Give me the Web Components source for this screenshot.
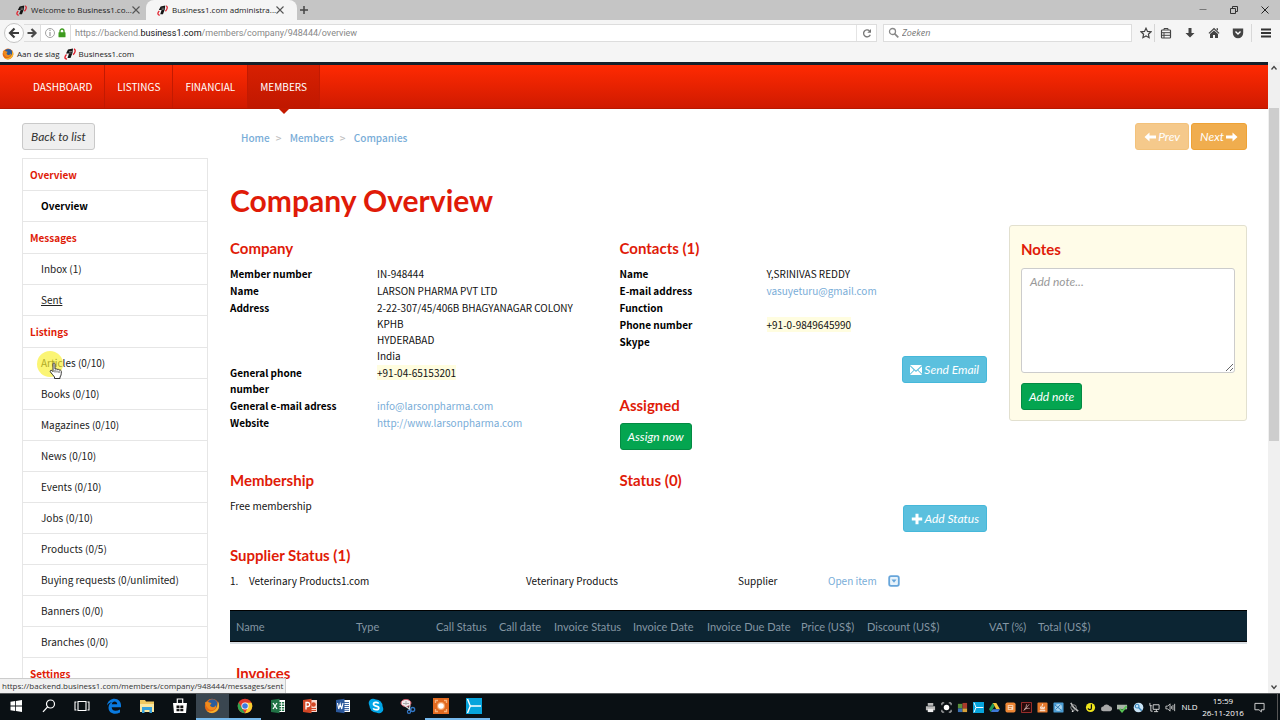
<!DOCTYPE html>
<html lang="en">
<head>
<meta charset="utf-8">
<title>Business1.com administration</title>
<style>
  :root {
    --sans: "Noto Sans CJK SC", "Noto Sans", sans-serif;
    --display: Lato, sans-serif;
    --chrome: "Open Sans", "Noto Sans", sans-serif;
    --red: #e01b08;
    --link: #79add8;
    --line: #e6e6e6;
  }
  html, body { height: 100%; margin: 0; overflow: hidden; }
  body { background: #fff; }
</style>
</head>
<body>
<desktop-screen></desktop-screen>

<script>
const ICONS = {
  brand: ['0 0 12 12', '<path d="M4 1.500 9 .5 8.500 5 6.500 10H3.500L5 5.500H2z" fill="#151515"/><path d="M5 3.500h3M5 5h2.500" stroke="#999" stroke-width=".7"/><path d="M2.500 6.500C.3 8.500.5 11.300 3 10.900M10 .8c1.800.8 1.500 3.700-.8 6" fill="none" stroke="#e0202c" stroke-width="1.400"/>'],
  close: ['0 0 10 10', '<path d="m1.500 1.500 7 7m0-7-7 7" stroke="#555" stroke-width="1.100"/>'],
  plus: ['0 0 10 10', '<path d="M5 1v8M1 5h8" stroke="#444" stroke-width="1.500"/>'],
  min: ['0 0 10 10', '<path d="M1.500 4.500h7" stroke="#777"/>'],
  restore: ['0 0 10 10', '<path d="M1.500 3.500h5v5h-5zM3.500 3V1.500h5v5H7" fill="none" stroke="#333"/>'],
  winclose: ['0 0 10 10', '<path d="m1.500 1.500 7 7m0-7-7 7" stroke="#222"/>'],
  back: ['0 0 12 12', '<path d="M6.500 1.500 2 6l4.500 4.500M2.500 6H11" fill="none" stroke="#3c3c3c" stroke-width="2.200"/>'],
  forward: ['0 0 12 12', '<path d="M5.500 2 9.500 6l-4 4M9 6H1.500" fill="none" stroke="#4a4a4a" stroke-width="2.200"/>'],
  info: ['0 0 12 12', '<circle cx="6" cy="6" r="4.500" fill="none" stroke="#999" stroke-width=".9"/><path d="M6 5v4M6 2.800v1.300" stroke="#999" stroke-width="1.200"/>'],
  lock: ['0 0 12 12', '<path d="M4 6V4a2 2 0 0 1 4 0v2" fill="none" stroke="#3e9b1f" stroke-width="1.300"/><rect x="2.500" y="5.300" width="7" height="5" rx=".5" fill="#3e9b1f"/>'],
  reload: ['0 0 12 12', '<path d="M9.300 7.800A3.500 3.500 0 1 1 8.500 3.800" fill="none" stroke="#777" stroke-width="1.300"/><path d="M10 2v3.700H6.300z" fill="#777"/>'],
  search: ['0 0 12 12', '<circle cx="4.500" cy="4.500" r="3" fill="none" stroke="#888" stroke-width="1.300"/><path d="m6.800 6.800 3.500 3.500" stroke="#888" stroke-width="1.700"/>'],
  star: ['0 0 12 12', '<path d="m6 1.200 1.500 3.200 3.500.4-2.600 2.400.7 3.500L6 9l-3.100 1.700.7-3.500L1 4.800l3.500-.4z" fill="none" stroke="#444" stroke-width="1.200"/>'],
  clip: ['0 0 12 12', '<rect x="1.500" y="3" width="9" height="8" rx=".8" fill="none" stroke="#444" stroke-width="1.200"/><path d="M4 3V1.500h4V3M1.500 5.700h9M1.500 8.300h9M4 5.700V11" fill="none" stroke="#444"/>'],
  down: ['0 0 12 12', '<path d="M4.500 1h3v5H10.500L6 10.500 1.500 6h3z" fill="#444"/>'],
  home: ['0 0 12 12', '<path d="M6 .8 11.500 6l-.8.8L6 2.500 1.300 6.800.5 6zM6 3.500l4 3.500v4H7V8H5v3H2V7zM8.500 1.200H10v2.500L8.500 2.400z" fill="#444"/>'],
  pocket: ['0 0 12 12', '<path d="M.8 1.500h10.400V6a5.200 5.200 0 0 1-10.400 0z" fill="#444"/><path d="M3.500 4.500 6 7l2.500-2.500" fill="none" stroke="#fff" stroke-width="1.400"/>'],
  menu: ['0 0 12 12', '<path d="M1 2.500h10M1 6h10M1 9.500h10" stroke="#333" stroke-width="1.800"/>'],
  left: ['0 0 12 12', '<path d="M5.500 1.500V4.500H12v3H5.500v3L.5 6z" fill="#fff"/>'],
  right: ['0 0 12 12', '<path d="M6.500 1.500V4.500H0v3h6.500v3l5-4.500z" fill="#fff"/>'],
  mail: ['0 0 12 12', '<path d="M0 1h12L6 6.500zM0 2.200 3.700 6 0 9.800zM12 2.200 8.300 6l3.700 3.800zM4.400 6.500 6 8l1.600-1.500L12 11H0z" fill="#fff"/>'],
  add: ['0 0 12 12', '<path d="M4.500.8h3v3.700h3.700v3H7.500v3.700h-3V7.500H.8v-3h3.700z" fill="#fff"/>'],
  expand: ['0 0 12 12', '<rect x="1.200" y="1.200" width="9.600" height="9.600" rx="1.800" fill="#e8f3fb" stroke="#67a5da" stroke-width="1.800"/><path d="M3.500 4.600h5L6 7.800z" fill="#67a5da"/>'],
  up: ['0 0 10 10', '<path d="m2.500 6.500 2.500-3 2.500 3" fill="none" stroke="#444" stroke-width="1.300"/>'],
  dn: ['0 0 10 10', '<path d="m2.500 3.500 2.500 3 2.500-3" fill="none" stroke="#444" stroke-width="1.300"/>'],
  hand: ['0 0 14 18', '<path d="M4 1.500c1-1 2-.3 2 .7v5c1.300-1 2 0 2 .4 1-.8 1.900-.2 2 .6 1-.6 2.300 0 2.300 1.300 0 3-.2 4-1.300 5.500v1.500H5.500V15C4 13 2.500 11.500 1.300 9.800.8 8.500 2 7.800 3 8.700l1 1z" fill="#fff" stroke="#333"/><path d="M6 8v2.500M8 8.500v2M10 9v2" stroke="#333" stroke-width=".8"/>'],
  firefox: ['0 0 16 16', '<circle cx="8" cy="8" r="7.200" fill="#e66a14"/><circle cx="8.500" cy="6.300" r="5" fill="#2b5d9c"/><path d="M1 4.500C3 2.500 5 4.500 7.500 5L6 7.500c2 3 5.500 1.500 6-.5.800 2-.5 4.500-3.500 5C5 12.500 2 9 1 4.500z" fill="#f08a1c"/><path d="M14 3.500c2 4 1 8-2 10s-7 2-9.500-1c4 2.500 9 .5 10.500-3.500.6-2 .8-4 1-5.500z" fill="#f8b62d"/>'],
  windows: ['0 0 16 16', '<path d="M2.500 3.700 7.200 3v4.600H2.500zM8 2.900l6-.9v5.600H8zM2.500 8.400h4.700V13l-4.700-.7zM8 8.400h6V14l-6-.9z" fill="#fff"/>'],
  find: ['0 0 16 16', '<circle cx="9.500" cy="6" r="4" fill="none" stroke="#fff" stroke-width="1.200"/><path d="m6.600 8.900-4.600 5" stroke="#fff" stroke-width="1.300"/>'],
  tasks: ['0 0 16 16', '<path d="M4 3.500h8v9H4zM2.500 4H1v8h1.500M13.500 4H15v8h-1.500" fill="none" stroke="#fff" stroke-width="1.100"/>'],
  edge: ['0 0 16 16', '<path d="M1 7.500C1.700 3 5 .8 8.500.8c4 0 6.500 3 6.500 6.500v1.900H5.700c.1 4 4.500 4.300 8.300 2.200v3c-5.500 3-11.500.6-11.500-5 0-3 2-4.700 4-5.400C3.500 4.200 2 5.700 1 7.500zm4.800-1.200h5.400c0-3.600-5-3.600-5.400 0z" fill="#0a7be0"/>'],
  folder: ['0 0 16 16', '<path d="M1 2h5l1 1.500h8V14H1z" fill="#f0c860"/><path d="M1 6h14v8H1z" fill="#fae7a0"/><path d="M3 9h10v6h-2.500v-3h-5v3H3z" fill="#36a1dc"/>'],
  store: ['0 0 16 16', '<path d="M1 5h14l-1 10H2z" fill="#fff"/><path d="M5.300 5V1h5.400v4" fill="none" stroke="#fff" stroke-width="1.200"/><path d="M4.500 7.500h3v2.500h-3zM8.300 7.500h3v2.500h-3zM4.500 10.700h3v2.500h-3zM8.300 10.700h3v2.500h-3z" fill="#111"/>'],
  chrome: ['0 0 16 16', '<circle cx="8" cy="8" r="7.300" fill="#e03b2e"/><path d="M1.600 4.500 6 12l2 3.300A7.300 7.300 0 0 1 1.600 4.500z" fill="#2fa44f"/><path d="M8 15.300 11.500 8 8 4.700h6.500A7.300 7.300 0 0 1 8 15.300z" fill="#f9cf30"/><circle cx="8" cy="8" r="3.600" fill="#fff"/><circle cx="8" cy="8" r="2.800" fill="#3d7ce0"/>'],
  excel: ['0 0 16 16', '<path d="M8 2h7v12H8z" fill="#fff"/><path d="M9 4h2.200v1.500H9zM12 4h2.200v1.500H12zM9 6.500h2.200V8H9zM12 6.500h2.200V8H12zM9 9h2.200v1.500H9zM12 9h2.200v1.500H12zM9 11.500h2.200V13H9zM12 11.500h2.200V13H12z" fill="#217346"/><path d="M1 2 9.500.7v14.600L1 14z" fill="#217346"/><path d="m3 5 4 6m0-6-4 6" stroke="#fff" stroke-width="1.300"/>'],
  ppt: ['0 0 16 16', '<path d="M8 2h7v12H8z" fill="#f7d8cf"/><circle cx="11.500" cy="6.500" r="2.300" fill="#d24726"/><path d="M9 10.500h5M9 12.500h5" stroke="#d24726"/><path d="M1 2 9.500.7v14.600L1 14z" fill="#d24726"/><path d="M4 11.500v-7h1.700a1.800 1.800 0 0 1 0 4H4" fill="none" stroke="#fff" stroke-width="1.300"/>'],
  word: ['0 0 16 16', '<path d="M8 2h7v12H8z" fill="#fff"/><path d="M9 4.500h5M9 6.500h5M9 8.500h5M9 10.500h5M9 12.300h5" stroke="#2b579a" stroke-width=".9"/><path d="M1 2 9.500.7v14.600L1 14z" fill="#2b579a"/><path d="m2.500 5 1.200 6 1.500-5 1.500 5L8 5" fill="none" stroke="#fff" stroke-width="1.100"/>'],
  skype: ['0 0 16 16', '<circle cx="5" cy="5" r="4.300" fill="#00a5e6"/><circle cx="11" cy="11" r="4.300" fill="#00a5e6"/><circle cx="8" cy="8" r="6.500" fill="#00a5e6"/><path d="M10.700 5.600C9.800 3.700 5.500 4 5.500 6.200c0 2.400 5.300 1.300 5.300 3.700 0 2.200-4.800 2.500-5.500.3" fill="none" stroke="#fff" stroke-width="1.700"/>'],
  snip: ['0 0 16 16', '<ellipse cx="6" cy="5" rx="5" ry="3.600" fill="#f3e8ea" stroke="#cf5a68"/><path d="M3 5.500h6M6 3v4" stroke="#aaa"/><path d="m5 8 6 4M10 7l-1 6" stroke="#ddd" stroke-width="1.200"/><circle cx="12.700" cy="11.500" r="2" fill="none" stroke="#3276c4" stroke-width="1.300"/><circle cx="9" cy="13.700" r="1.600" fill="none" stroke="#3276c4" stroke-width="1.200"/>'],
  capture: ['0 0 16 16', '<path d="M0 0h16v16H0z" fill="#e2691f"/><path d="M2.500 5V2.500H5M11 2.500h2.500V5M13.500 11v2.500H11M5 13.500H2.500V11" fill="none" stroke="#f6b27d" stroke-width="1.300"/><circle cx="8" cy="8" r="4" fill="#f4a468"/><circle cx="8" cy="8" r="2.800" fill="#fff"/>'],
  wings: ['0 0 16 16', '<path d="M0 0h16v16H0z" fill="#07a4dc"/><path d="m1.500 1 2.800 7-2.800 7M4.300 8H15" fill="none" stroke="#fff" stroke-width="1.400"/>'],
  printer: ['0 0 12 12', '<path d="M3 1h6v3H3zM1 4.500h10V9H1z" fill="#bbb"/><path d="M3 7.500h6V11H3z" fill="#eee"/>'],
  target: ['0 0 12 12', '<circle cx="6" cy="6" r="3" fill="#fff"/><path d="M1 3.500V1h2.500M8.500 1H11v2.500M11 8.500V11H8.500M3.500 11H1V8.500" fill="none" stroke="#ddd"/>'],
  blocks: ['0 0 12 12', '<path d="M1 2h5v5H1z" fill="#58903b"/><path d="M6 1h5v6H6z" fill="#a93a2b"/><path d="M1 7h5v4H1z" fill="#3a70b3"/><path d="M6 7h5v4H6z" fill="#d8a138"/>'],
  drive: ['0 0 12 12', '<path d="M4 1h4l4 7H8z" fill="#f6c83a"/><path d="M4 1 0 8l2 3 4-6.500z" fill="#229a57"/><path d="M4 8h8l-2 3H2z" fill="#3c78d8"/>'],
  orange: ['0 0 12 12', '<rect x=".5" y=".5" width="11" height="11" rx="2" fill="#ee8735"/><path d="M3 3.500h6v5H3z" fill="#fbe3cd"/><path d="M4 5h4M4 7h3" stroke="#d66d1e"/>'],
  acro: ['0 0 12 12', '<path d="M.5.5h11v11H.5z" fill="#2a0a0a" stroke="#a83330"/><path d="M3 9.500C5 7 6 5 6 2.500M9 2.500 4 8.500M3.500 8c2-1 4-1.300 6-1" fill="none" stroke="#d9b7b4" stroke-width=".8"/>'],
  java: ['0 0 12 12', '<rect x=".5" y=".5" width="11" height="11" rx="1" fill="#e5792c"/><path d="M3 9.500h6M3.500 7.500h5M6 6c-2-2 1-2 0-4M4 5v1.500h4V5" fill="none" stroke="#fff"/>'],
  globe: ['0 0 12 12', '<rect x=".5" y=".5" width="11" height="11" rx="1" fill="#4c9dd4"/><circle cx="6" cy="6" r="3.800" fill="#a7d3ee"/><path d="m2 3 7 6M3 8l5-5" stroke="#2876ae"/>'],
  plug: ['0 0 12 12', '<path d="m2 1 3 5 5 4" stroke="#bbb" stroke-width="1.800"/><circle cx="5" cy="6" r="3" fill="none" stroke="#999"/><circle cx="4" cy="10" r="1" fill="#ddd"/>'],
  clockdot: ['0 0 12 12', '<circle cx="6" cy="6" r="5" fill="#efe51c"/><path d="M7 2.500v4.300c0 2-3.500 2-3.500 0" fill="none" stroke="#111" stroke-width="1.300"/>'],
  cloud: ['0 0 12 12', '<path d="M2.500 10a2.500 2.500 0 0 1 0-5 4 4 0 0 1 7-.5A2.800 2.800 0 0 1 10 10z" fill="#a8a8a8"/>'],
  safe: ['0 0 12 12', '<path d="M0 3h11v5H0z" fill="#aab5a9"/><path d="m3 7.500 2.500 3 5-6" fill="none" stroke="#57c353" stroke-width="2"/>'],
  tool: ['0 0 12 12', '<circle cx="6" cy="6" r="5.300" fill="#c8e3f5"/><circle cx="4.500" cy="4.500" r="2" fill="none" stroke="#3787be" stroke-width="1.200"/><path d="m6 6 3.500 3.500" stroke="#3787be" stroke-width="1.500"/>'],
  net: ['0 0 12 12', '<path d="M4.500 3H11v5H4.500zM8 8v2.500M5.500 10.500H10M1 1v3h2M2 4v6h2" fill="none" stroke="#ddd"/>'],
  sound: ['0 0 12 12', '<path d="M1 4.500h2L5.500 2v8L3 7.500H1zM7 4.500v3M8.700 3.200v5.600M10.500 2v8" fill="none" stroke="#ddd" stroke-width=".9"/>'],
  notice: ['0 0 12 12', '<path d="M1 1.500h10v7H8v2.300L5.500 8.500H1z" fill="none" stroke="#ddd"/>']
};

const define = (name, css, html) => {
  customElements.define(name, class extends HTMLElement {
    constructor() { super(); this.attachShadow({ mode: 'open' }); }
    connectedCallback() {
      if (this.shadowRoot.firstChild) return;
      const t = document.createElement('template');
      t.innerHTML = `<style>*{box-sizing:border-box}${css}</style>` +
        (typeof html === 'function' ? html(this) : html);
      this.shadowRoot.append(t.content.cloneNode(true));
    }
  });
};

define('ui-icon',
  ':host{display:inline-block;flex:none;width:12px;height:12px}svg{display:block;width:100%;height:100%}',
  el => { const [box, art] = ICONS[el.getAttribute('name')];
    return `<svg viewBox="${box}" aria-hidden="true">${art}</svg>`; });

define('ui-button', `
  :host{display:inline-block;flex:none}
  button{display:flex;align-items:center;gap:2px;height:27px;padding:0 8px;border:1px solid #c9c9c9;border-radius:3px;
    background:#efefef;color:#333;font:italic 12px/20px var(--display);white-space:nowrap}
  :host([kind=green]) button{padding:0 7px;background:#04a550;border-color:#048a43;color:#fff}
  :host([kind=blue]) button{padding:0 7px;background:#5bc0de;border-color:#46b8da;color:#fff}
  :host([kind=amber]) button{background:#f0ad4e;border-color:#eea236;color:#fff}
  :host([disabled]) button{opacity:.65}`,
  el => `<button type="button"${el.hasAttribute('disabled') ? ' disabled' : ''}><slot></slot></button>`);

define('browser-tab', `
  :host{display:block;width:140px;height:20px;padding-left:10px}
  :host([active]){padding:0;width:151px}
  .tab{display:flex;align-items:center;gap:4px;height:20px;padding:0 0 0 5px;font:8px/20px var(--chrome);color:#222}
  :host([active]) .tab{padding:0 12px 0 11px;background:#f5f5f5;border-radius:8px 8px 0 0}
  .t{flex:1;min-width:0;white-space:nowrap}
  ui-icon{width:11px;height:11px}
  button{display:flex;border:0;padding:0;background:none}
  button ui-icon{width:10px;height:10px}`,
  `<div class="tab"><ui-icon name="brand"></ui-icon><span class="t"><slot></slot></span>
   <button aria-label="Close tab"><ui-icon name="close"></ui-icon></button></div>`);

define('browser-chrome', `
  :host{display:block;flex:none;background:#f5f5f5;font:8px/16px var(--chrome);color:#222}
  button{display:grid;place-items:center;border:0;padding:0;background:none;flex:none}
  .tabs{display:flex;height:20px;padding-left:1px;background:#c5c5c5}
  .tabs browser-tab:first-child{margin-right:5px}
  .new{width:14px}.new ui-icon{width:10px;height:10px}
  .win{margin-left:auto;display:flex;gap:11px;padding-right:5px}
  .win button{width:20px}.win ui-icon{width:10px;height:10px}
  .bar{display:flex;align-items:center;height:26px;padding-left:4px}
  .back{width:20px;height:20px;border:1px solid #c4c4c4;border-radius:10px;background:#fdfdfd}
  .fwd{width:17px;height:18px;border:1px solid #ddd;border-left:0}
  .url{flex:1;display:flex;align-items:center;height:18px;border:1px solid #ddd;border-left:0;background:#fff;padding-left:3px}
  .url a{color:#888;text-decoration:none;padding-left:4px;border-left:1px solid #ddd;margin-left:2px;flex:1;font:9px/16px Roboto,sans-serif}
  .url b{font-weight:400;color:#111}
  .url .re{width:20px;height:16px;border-left:1px solid #e4e4e4}
  .find{display:flex;align-items:center;width:249px;height:18px;margin:0 7px 0 6px;padding:0 4px;border:1px solid #ddd;background:#fff;gap:2px}
  input{flex:1;min-width:0;border:0;padding:0;background:none;font:italic 9px/14px var(--chrome)}
  input::placeholder{color:#777;opacity:1}
  .ic{width:14px;height:18px;margin-right:10px}
  .ic.s{width:16px;margin-right:4px;border-right:1px solid #d5d5d5;padding-right:1px}
  .ic.m{width:29px;margin:0 0 0 -4px;border-left:1px solid #d8d8d8}
  .marks{display:flex;align-items:center;height:16px;padding-left:2px}
  .marks a{display:flex;align-items:center;gap:3px;margin-right:4px;color:#222;text-decoration:none}`,
  `<div class="tabs"><browser-tab>Welcome to Business1.co...</browser-tab><browser-tab active>Business1.com administra...</browser-tab>
    <button class="new" aria-label="New tab"><ui-icon name="plus"></ui-icon></button>
    <div class="win"><button aria-label="Minimise"><ui-icon name="min"></ui-icon></button><button aria-label="Restore"><ui-icon name="restore"></ui-icon></button><button aria-label="Close"><ui-icon name="winclose"></ui-icon></button></div></div>
  <div class="bar"><button class="back" aria-label="Back"><ui-icon name="back"></ui-icon></button><button class="fwd" aria-label="Forward"><ui-icon name="forward"></ui-icon></button>
    <div class="url"><ui-icon name="info"></ui-icon><ui-icon name="lock"></ui-icon><a href="#">https://backend.<b>business1.com</b>/members/company/948444/overview</a><button class="re" aria-label="Reload"><ui-icon name="reload"></ui-icon></button></div>
    <label class="find"><ui-icon name="search"></ui-icon><input aria-label="Search" placeholder="Zoeken"></label>
    <button class="ic s" aria-label="Bookmark"><ui-icon name="star"></ui-icon></button><button class="ic" aria-label="Library"><ui-icon name="clip"></ui-icon></button><button class="ic" aria-label="Downloads"><ui-icon name="down"></ui-icon></button><button class="ic" aria-label="Home"><ui-icon name="home"></ui-icon></button><button class="ic" aria-label="Pocket"><ui-icon name="pocket"></ui-icon></button><button class="ic m" aria-label="Menu"><ui-icon name="menu"></ui-icon></button></div>
  <div class="marks"><a href="#"><ui-icon name="firefox"></ui-icon>Aan de slag</a><a href="#"><ui-icon name="brand"></ui-icon>Business1.com</a></div>`);

define('main-nav', `
  :host{display:block;border-top:3px solid #14202a;background:linear-gradient(#ff2a02,#cf1a00);height:47px;border-bottom:1px solid #b81800}
  nav{display:flex;height:43px;padding-left:21px}
  a{position:relative;padding:0 12px;border-right:1px solid #c21a02;color:#fff;font:10px/44px var(--sans);text-decoration:none}
  a[aria-current]{background:linear-gradient(#d82002,#c01800)}
  a[aria-current]::after{content:"";position:absolute;left:50%;top:100%;margin-left:-6px;border:6px solid transparent;border-top-color:#c41900;border-bottom:0}`,
  `<nav><a href="#">DASHBOARD</a><a href="#">LISTINGS</a><a href="#">FINANCIAL</a><a href="#" aria-current="page">MEMBERS</a></nav>`);

define('menu-group', `
  :host{display:block}
  h4{margin:0;padding:0 7px;height:32px;border-bottom:1px solid var(--line);color:var(--red);font:bold 10px/32px var(--sans)}`,
  el => `<h4>${el.getAttribute('label')}</h4><slot></slot>`);

define('menu-item', `
  :host{display:block;position:relative;height:31px;border-bottom:1px solid var(--line);padding-left:18px;font:10px/30px var(--sans)}
  a{color:#222;text-decoration:none}
  :host([current]) a{font-weight:700;color:#000}
  :host([hover]) a{text-decoration:underline}`,
  '<a href="#"><slot></slot></a><slot name="over"></slot>');

define('click-pointer', `
  :host{position:absolute;left:14px;top:3px;width:30px;height:30px;pointer-events:none}
  i{position:absolute;left:0;top:0;width:26px;height:26px;border-radius:13px;background:#f9f02a;opacity:.65}
  ui-icon{position:absolute;left:12px;top:11px;width:14px;height:18px}`,
  '<i></i><ui-icon name="hand"></ui-icon>');

define('side-menu', `
  :host{display:block;border:1px solid var(--line);border-bottom:0}`,
  `<menu-group label="Overview"><menu-item current>Overview</menu-item></menu-group>
   <menu-group label="Messages"><menu-item>Inbox (1)</menu-item><menu-item hover>Sent</menu-item></menu-group>
   <menu-group label="Listings"><menu-item>Articles (0/10)<click-pointer slot="over"></click-pointer></menu-item><menu-item>Books (0/10)</menu-item><menu-item>Magazines (0/10)</menu-item><menu-item>News (0/10)</menu-item><menu-item>Events (0/10)</menu-item><menu-item>Jobs (0/10)</menu-item><menu-item>Products (0/5)</menu-item><menu-item>Buying requests (0/unlimited)</menu-item><menu-item>Banners (0/0)</menu-item><menu-item>Branches (0/0)</menu-item></menu-group>
   <menu-group label="Settings"></menu-group>`);

define('crumb-trail', `
  :host{display:flex;flex:1;align-items:center;padding:2px 0 0 11px;font:500 10px/16px var(--sans);color:#bbb}
  a{color:var(--link);text-decoration:none}
  span{width:20px;padding-left:6px}`,
  '<a href="#">Home</a><span>&gt;</span><a href="#">Members</a><span>&gt;</span><a href="#">Companies</a>');

define('info-section', `
  :host{display:block;font:10px/16px var(--sans);color:#111}
  h3{margin:0 0 8px;color:var(--red);font:bold 15px/20px var(--display)}`,
  el => `<h3>${el.getAttribute('label')}</h3><slot></slot>`);

define('info-list', `
  :host{display:grid;row-gap:1px}`, '<slot></slot>');

define('info-row', `
  :host{display:grid;grid-template-columns:2fr 3fr;font:10px/16px var(--sans);min-height:16px}
  b{color:#000;padding-right:40px}
  :host([wide]) b{padding-right:0;white-space:nowrap}
  ::slotted(a){color:var(--link);text-decoration:none}
  ::slotted(mark){background:#fffde0;color:inherit}`,
  el => `<b>${el.getAttribute('label')}</b><div><slot></slot></div>`);

define('notes-card', `
  :host{display:block;padding:13px 11px 10px;border:1px solid #e2e0cf;border-radius:3px;background:#fffce8}
  h3{margin:0 0 9px;color:var(--red);font:bold 15px/20px var(--display)}
  textarea{display:block;width:100%;height:105px;margin-bottom:10px;padding:4px 8px;border:1px solid #ccc;border-radius:3px;background:#fff;font:italic 12px/18px var(--display);resize:vertical}
  textarea::placeholder{color:#999}`,
  `<h3 id="n">Notes</h3><textarea aria-labelledby="n" placeholder="Add note..."></textarea><ui-button kind="green">Add note</ui-button>`);

define('supplier-table', `
  :host{display:block}
  table{width:100%;border-collapse:collapse;table-layout:fixed;font:10px/16px var(--sans);color:#111}
  td{padding:0;white-space:nowrap}
  a{color:var(--link);text-decoration:none}
  ui-icon{margin-left:11px;vertical-align:-2px}`,
  `<table><colgroup><col style="width:19px"><col style="width:277px"><col style="width:212px"><col style="width:90px"><col></colgroup>
   <tr><td>1.</td><td>Veterinary Products1.com</td><td>Veterinary Products</td><td>Supplier</td><td><a href="#">Open item<ui-icon name="expand"></ui-icon></a></td></tr></table>`);

const COLS = [['Name',120],['Type',80],['Call Status',63],['Call date',55],['Invoice Status',79],['Invoice Date',74],['Invoice Due Date',94],['Price (US$)',66],['Discount (US$)',122],['VAT (%)',49],['Total (US$)']];
define('invoice-table', `
  :host{display:block;border-bottom:2px solid #d9dfe4}
  table{width:100%;border-collapse:collapse;table-layout:fixed;background:#0c2533;border:solid #000;border-width:1px 0}
  th{height:31px;padding:1px 0 0 6px;text-align:left;color:#8496a3;font:11px/16px var(--display);white-space:nowrap}`,
  `<table><thead><tr>${COLS.map(([t, w]) => `<th scope="col"${w ? ` style="width:${w}px"` : ''}>${t}</th>`).join('')}</tr></thead></table>`);

define('company-page', `
  :host{display:block;height:100%;overflow:hidden;background:#fff}
  .body{display:grid;grid-template-columns:186px minmax(0,1fr);column-gap:22px;padding:14px 21px 0 22px}
  side-menu{margin-top:8px}
  .top{display:flex;height:27px;gap:2px}
  h1{margin:32px 0 7px;color:var(--red);font:bold 30px/36px var(--display)}
  .cols{display:grid;grid-template-columns:minmax(0,757fr) minmax(0,238fr);column-gap:22px;align-items:start}
  .info{display:grid;grid-template-columns:1fr 1fr;gap:20px 22px;padding-top:13px}
  .right{display:flex;justify-content:flex-end;padding-top:6px}
  .assigned{margin-top:12px}
  .status .right{padding-top:7px}
  .supplier{margin-top:13px}
  invoice-table{margin:21px 0 19px}
  .inv{padding-left:6px}`,
  `<main-nav></main-nav>
  <div class="body"><aside><ui-button>Back to list</ui-button><side-menu></side-menu></aside>
  <main><div class="top"><crumb-trail></crumb-trail><ui-button kind="amber" disabled><ui-icon name="left"></ui-icon>Prev</ui-button><ui-button kind="amber">Next<ui-icon name="right"></ui-icon></ui-button></div>
  <h1>Company Overview</h1>
  <div class="cols"><div><div class="info">
    <info-section label="Company"><info-list>
      <info-row label="Member number">IN-948444</info-row><info-row label="Name">LARSON PHARMA PVT LTD</info-row>
      <info-row label="Address">2-22-307/45/406B BHAGYANAGAR COLONY<br>KPHB<br>HYDERABAD<br>India</info-row>
      <info-row label="General phone number"><mark>+91-04-65153201</mark></info-row>
      <info-row wide label="General e-mail adress"><a href="#">info@larsonpharma.com</a></info-row>
      <info-row label="Website"><a href="#">http://www.larsonpharma.com</a></info-row></info-list></info-section>
    <div><info-section label="Contacts (1)"><info-list>
      <info-row label="Name">Y,SRINIVAS REDDY</info-row><info-row label="E-mail address"><a href="#">vasuyeturu@gmail.com</a></info-row>
      <info-row label="Function"></info-row><info-row label="Phone number"><mark>+91-0-9849645990</mark></info-row><info-row label="Skype"></info-row></info-list>
      <div class="right"><ui-button kind="blue"><ui-icon name="mail"></ui-icon>Send Email</ui-button></div></info-section>
      <info-section class="assigned" label="Assigned"><ui-button kind="green">Assign now</ui-button></info-section></div>
    <info-section label="Membership">Free membership</info-section>
    <info-section class="status" label="Status (0)"><div class="right"><ui-button kind="blue"><ui-icon name="add"></ui-icon>Add Status</ui-button></div></info-section>
  </div>
  <info-section class="supplier" label="Supplier Status (1)"><supplier-table></supplier-table></info-section></div>
  <notes-card></notes-card></div>
  <invoice-table></invoice-table>
  <info-section class="inv" label="Invoices"></info-section></main></div>`);

define('scroll-rail', `
  :host{display:flex;flex-direction:column;align-items:center;width:12px;background:#f0f0f0;padding:1px 0}
  ui-icon{width:10px;height:10px}
  .track{flex:1;align-self:stretch;display:flex;flex-direction:column;padding:35px 1px 0}
  .thumb{flex:0 0 58%;background:#cdcdcd}`,
  '<ui-icon name="up"></ui-icon><div class="track"><div class="thumb"></div></div><ui-icon name="dn"></ui-icon>');

const APPS = ['windows','find','tasks','edge','folder','store','firefox','chrome','excel','ppt','word','skype','snip','capture','wings'];
const TRAY = ['printer','target','blocks','wings','drive','orange','acro','java','globe','plug','clockdot','cloud','safe','tool','net','sound'];
define('task-bar', `
  :host{display:flex;flex:none;height:27px;background:#0a1014;border-top:1px solid #55585a;color:#fff;font:8px/12px var(--chrome)}
  button{display:grid;place-items:center;border:0;padding:0;background:none}
  .apps{display:flex;width:490px}
  .apps button{flex:1;border-bottom:2px solid transparent}
  .apps ui-icon{width:16px;height:16px}
  .apps .on{border-color:#76b9ed}
  .apps .active{background:#3a4650}
  .tray{display:flex;align-items:center;margin-left:auto}
  .tray button{width:16px}
  .tray button ui-icon{width:11px;height:11px}
  .lang{width:23px;text-align:center}
  .clock{width:44px;display:grid;justify-items:center;white-space:nowrap}
  .tray .note{width:29px;margin-right:3px}
  .end{width:3px;height:26px;border-left:1px solid #555}`,
  `<div class="apps">${APPS.map(n => `<button class="${['firefox','chrome','capture','wings'].includes(n) ? 'on' : ''} ${n === 'firefox' ? 'active' : ''}" aria-label="${n}"><ui-icon name="${n}"></ui-icon></button>`).join('')}</div>
   <div class="tray">${TRAY.map(n => `<button aria-label="${n}"><ui-icon name="${n}"></ui-icon></button>`).join('')}<span class="lang">NLD</span><time class="clock"><span>15:59</span><span>26-11-2016</span></time><button class="note" aria-label="Notifications"><ui-icon name="notice"></ui-icon></button><span class="end"></span></div>`);

define('desktop-screen', `
  :host{display:flex;flex-direction:column;height:100vh}
  .view{position:relative;flex:1;min-height:0;display:grid;grid-template-columns:minmax(0,1fr) 12px}
  .status{position:absolute;left:0;bottom:0;height:15px;padding:0 2px;border:1px solid #ccc;border-left:0;border-bottom:0;background:#f1f1f1;color:#333;font:8px/14px var(--chrome);white-space:nowrap}`,
  `<browser-chrome></browser-chrome>
   <div class="view"><company-page></company-page><scroll-rail></scroll-rail><div class="status">https://backend.business1.com/members/company/948444/messages/sent</div></div>
   <task-bar></task-bar>`);
</script>
</body>
</html>
